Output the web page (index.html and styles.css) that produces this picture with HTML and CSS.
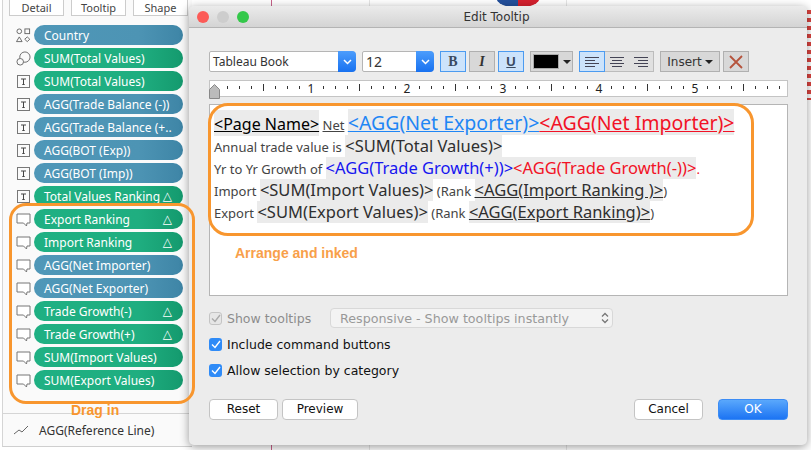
FILE: index.html
```html
<!DOCTYPE html>
<html lang="en">
<head>
    <meta charset="UTF-8">
    <title>Edit Tooltip</title>
    <link rel="stylesheet" href="styles.css">
</head>
<body>
    <svg class="defs" width="0" height="0">
        <symbol id="i-shape" viewBox="0 0 16 16">
            <g fill="none" stroke="#666" stroke-width="1">
                <circle cx="3.5" cy="3.5" r="2.5"/><rect x="9.5" y="1" width="5" height="5"/>
                <path d="M3.5 9.5l3 5h-6z"/><path d="M12 9.5l2.7 2.5-2.7 2.5-2.7-2.5z"/>
            </g>
        </symbol>
        <symbol id="i-size" viewBox="0 0 16 16">
            <g fill="none" stroke="#666" stroke-width="1">
                <circle cx="9.5" cy="6.5" r="5.5"/><circle cx="4.5" cy="11.5" r="3.5" fill="#fafafa"/>
            </g>
        </symbol>
        <symbol id="i-text" viewBox="0 0 15 15">
            <rect x="1.500" y="1.500" width="12" height="12" fill="none" stroke="#777"/>
            <path d="M5 5h5M7.500 5v5.500M6.300 10.500h2.400" fill="none" stroke="#444"/>
        </symbol>
        <symbol id="i-tip" viewBox="0 0 15 15">
            <path d="M1 2h13v9h-3l-.5 3-3-3H1z" fill="#fff" stroke="#777"/>
        </symbol>
    </svg>

    <div class="backdrop">
        <div class="map-line line-a"></div>
        <div class="map-line line-b"></div>
        <div class="map-line line-c"></div>
        <div class="flag"></div>
        <div class="stripes"></div>
    </div>

    <aside class="sidebar">
        <div class="tabs">
            <div class="tab">Detail</div>
            <div class="tab">Tooltip</div>
            <div class="tab">Shape</div>
        </div>
        <div class="rows">
            <div class="row"><svg class="icon"><use href="#i-shape"/></svg><div class="pill blue">Country</div></div>
            <div class="row"><svg class="icon"><use href="#i-size"/></svg><div class="pill green">SUM(Total Values)</div></div>
            <div class="row"><svg class="icon"><use href="#i-text"/></svg><div class="pill green">SUM(Total Values)</div></div>
            <div class="row"><svg class="icon"><use href="#i-text"/></svg><div class="pill blue">AGG(Trade Balance (-))</div></div>
            <div class="row"><svg class="icon"><use href="#i-text"/></svg><div class="pill blue">AGG(Trade Balance (+..</div></div>
            <div class="row"><svg class="icon"><use href="#i-text"/></svg><div class="pill blue">AGG(BOT (Exp))</div></div>
            <div class="row"><svg class="icon"><use href="#i-text"/></svg><div class="pill blue">AGG(BOT (Imp))</div></div>
            <div class="row"><svg class="icon"><use href="#i-text"/></svg><div class="pill green">Total Values Ranking<span class="delta">△</span></div></div>
            <div class="row"><svg class="icon"><use href="#i-tip"/></svg><div class="pill green">Export Ranking<span class="delta">△</span></div></div>
            <div class="row"><svg class="icon"><use href="#i-tip"/></svg><div class="pill green">Import Ranking<span class="delta">△</span></div></div>
            <div class="row"><svg class="icon"><use href="#i-tip"/></svg><div class="pill blue">AGG(Net Importer)</div></div>
            <div class="row"><svg class="icon"><use href="#i-tip"/></svg><div class="pill blue">AGG(Net Exporter)</div></div>
            <div class="row"><svg class="icon"><use href="#i-tip"/></svg><div class="pill green">Trade Growth(-)<span class="delta">△</span></div></div>
            <div class="row"><svg class="icon"><use href="#i-tip"/></svg><div class="pill green">Trade Growth(+)<span class="delta">△</span></div></div>
            <div class="row"><svg class="icon"><use href="#i-tip"/></svg><div class="pill green">SUM(Import Values)</div></div>
            <div class="row"><svg class="icon"><use href="#i-tip"/></svg><div class="pill green">SUM(Export Values)</div></div>
        </div>
        <div class="ref-line">
            <svg class="ref-icon" viewBox="0 0 16 10"><path d="M1 9l5-4 3 2 6-6" fill="none" stroke="#666"/></svg>
            <span>AGG(Reference Line)</span>
        </div>
    </aside>

    <section class="dialog">
        <div class="titlebar">
            <div class="lights">
                <span class="light red"></span>
                <span class="light grey"></span>
                <span class="light lime"></span>
            </div>
            <div class="title">Edit Tooltip</div>
        </div>

        <div class="dialog-body">
            <div class="toolbar">
                <div class="combo font-combo"><span>Tableau Book</span><i class="combo-btn"><svg width="9" height="6" viewBox="0 0 9 6"><path d="M1 1l3.500 3.500L8 1" fill="none" stroke="#fff" stroke-width="1.500"/></svg></i></div>
                <div class="combo size-combo"><span>12</span><i class="combo-btn"><svg width="9" height="6" viewBox="0 0 9 6"><path d="M1 1l3.500 3.500L8 1" fill="none" stroke="#fff" stroke-width="1.500"/></svg></i></div>
                <div class="tool on bold">B</div>
                <div class="tool ital">I</div>
                <div class="tool on under">U</div>
                <div class="tool color"><span class="swatch"></span><span class="caret"></span></div>
                <div class="align-group">
                    <div class="align on"><svg width="16" height="10" viewBox="0 0 16 10"><path d="M1 .5h14M1 3.500h10M1 6.500h14M1 9.500h10" stroke="#445"/></svg></div>
                    <div class="align"><svg width="16" height="10" viewBox="0 0 16 10"><path d="M1 .5h14M3 3.500h10M1 6.500h14M3 9.500h10" stroke="#445"/></svg></div>
                    <div class="align"><svg width="16" height="10" viewBox="0 0 16 10"><path d="M1 .5h14M5 3.500h10M1 6.500h14M5 9.500h10" stroke="#445"/></svg></div>
                </div>
                <div class="tool insert">Insert<span class="caret"></span></div>
                <div class="tool clear"><svg width="14" height="14" viewBox="0 0 14 14"><path d="M1 1l12 12M13 1L1 13" stroke="#b5533c" stroke-width="1.800"/></svg></div>
            </div>

            <div class="ruler">
                <svg class="ruler-mark" width="11" height="15" viewBox="0 0 11 15"><path d="M.5 14.500v-9l5-5 5 5v9z" fill="#bbb" stroke="#888"/></svg>
                <span class="ruler-num">1</span>
                <span class="ruler-num">2</span>
                <span class="ruler-num">3</span>
                <span class="ruler-num">4</span>
                <span class="ruler-num">5</span>
            </div>

            <div class="editor">
                <div class="line first">
                    <span class="f big ul">&lt;Page Name&gt;</span> <span class="plain ul">Net</span> <span class="f huge ul c-blue">&lt;AGG(Net Exporter)&gt;</span><span class="f huge ul c-red">&lt;AGG(Net Importer)&gt;</span>
                </div>
                <div class="line">
                    <span class="plain">Annual trade value is</span> <span class="f">&lt;SUM(Total Values)&gt;</span>
                </div>
                <div class="line">
                    <span class="plain">Yr to Yr Growth of</span> <span class="f c-deep">&lt;AGG(Trade Growth(+))&gt;</span><span class="f c-red">&lt;AGG(Trade Growth(-))&gt;</span><span class="plain c-red">.</span>
                </div>
                <div class="line">
                    <span class="plain">Import</span> <span class="f">&lt;SUM(Import Values)&gt;</span> <span class="plain">(Rank</span> <span class="f ul">&lt;AGG(Import Ranking )&gt;</span><span class="plain">)</span>
                </div>
                <div class="line">
                    <span class="plain">Export</span> <span class="f">&lt;SUM(Export Values)&gt;</span> <span class="plain">(Rank</span> <span class="f ul">&lt;AGG(Export Ranking)&gt;</span><span class="plain">)</span>
                </div>
                <div class="ink-box"></div>
                <div class="ink-label">Arrange and inked</div>
            </div>

            <div class="options">
                <div class="opt-row show-row">
                    <label class="check off"><span class="box"><svg width="10" height="9" viewBox="0 0 10 9"><path d="M1 4.500l3 3 5-6.500" fill="none" stroke="#aaa" stroke-width="1.400"/></svg></span>Show tooltips</label>
                    <div class="select">
                        <span>Responsive - Show tooltips instantly</span>
                        <svg width="8" height="12" viewBox="0 0 8 12"><path d="M1 4.500L4 1.500l3 3M1 7.500l3 3 3-3" fill="none" stroke="#777" stroke-width="1.300"/></svg>
                    </div>
                </div>
                <div class="opt-row incl-row">
                    <label class="check"><span class="box"><svg width="10" height="9" viewBox="0 0 10 9"><path d="M1 4.500l3 3 5-6.500" fill="none" stroke="#fff" stroke-width="1.400"/></svg></span>Include command buttons</label>
                </div>
                <div class="opt-row allow-row">
                    <label class="check"><span class="box"><svg width="10" height="9" viewBox="0 0 10 9"><path d="M1 4.500l3 3 5-6.500" fill="none" stroke="#fff" stroke-width="1.400"/></svg></span>Allow selection by category</label>
                </div>
            </div>

            <div class="footer">
                <div class="btn reset">Reset</div>
                <div class="btn preview">Preview</div>
                <div class="btn cancel">Cancel</div>
                <div class="btn ok">OK</div>
            </div>
        </div>
    </section>

    <div class="drag-box"></div>
    <div class="drag-label">Drag in</div>
</body>
</html>
```

FILE: styles.css
```css
* {
    box-sizing: border-box;
}

html, body {
    margin: 0;
    padding: 0;
}

body {
    position: relative;
    width: 811px;
    height: 450px;
    overflow: hidden;
    background: #fff;
    font-family: "DejaVu Sans", sans-serif;
}

.defs {
    position: absolute;
}

/* map behind the dialog */
.backdrop {
    position: absolute;
    inset: 0;
}

.map-line {
    position: absolute;
    top: 0;
    bottom: 0;
    width: 1px;
    background: #e6e6e6;
}

.line-a { left: 271px; background: #c9628a; }
.line-b { left: 369px; }
.line-c { left: 566px; }

.flag {
    position: absolute;
    left: 496px;
    top: -14px;
    width: 44px;
    height: 22px;
    border-radius: 50%;
    background: linear-gradient(90deg, #23509c 0 50%, #d5202e 50%);
}

.stripes {
    position: absolute;
    left: 806px;
    top: 10px;
    width: 5px;
    height: 90px;
    background: repeating-linear-gradient(180deg, #d9433f 0 4px, #fff 4px 8px);
}

/* left shelf */
.sidebar {
    position: relative;
    width: 190px;
    height: 447px;
    margin-left: 2px;
    display: flex;
    flex-direction: column;
    background: #fafafa;
    border-left: 1px solid #d5d5d5;
    border-bottom: 1px solid #cfcfcf;
}

.tabs {
    display: flex;
    gap: 7px;
    padding-left: 6px;
}

.tab {
    width: 55px;
    height: 16px;
    background: #fff;
    border: 1px solid #ccc;
    border-top: none;
    color: #444;
    font-family: "Noto Sans", sans-serif;
    font-size: 11px;
    line-height: 15px;
    text-align: center;
}

.rows {
    display: flex;
    flex-direction: column;
    gap: 3px;
    padding: 9px 0 0 13px;
}

.row {
    display: flex;
    align-items: center;
    gap: 3px;
    height: 20px;
}

.icon {
    width: 15px;
    height: 15px;
    flex: none;
}

.pill {
    display: flex;
    align-items: center;
    justify-content: space-between;
    width: 149px;
    height: 20px;
    padding: 0 11px 0 10px;
    border-radius: 10px;
    color: #fff;
    font-family: "Noto Sans", sans-serif;
    font-size: 12px;
    white-space: nowrap;
}

.blue {
    background: linear-gradient(90deg, #4f97b8, #4d94b4 70%, #3e85a6);
}

.green {
    background: linear-gradient(90deg, #1fb083, #1fae80 70%, #149a6e);
}

.delta {
    font-family: "DejaVu Sans", sans-serif;
    font-size: 12px;
}

.ref-line {
    display: flex;
    align-items: center;
    gap: 10px;
    height: 33px;
    margin-top: auto;
    padding-left: 10px;
    border-top: 1px solid #d5d5d5;
    color: #333;
    font-family: "Noto Sans", sans-serif;
    font-size: 12px;
}

.ref-icon {
    width: 16px;
    height: 10px;
}

/* hand drawn notes, they lie over the shelf and the dialog edge */
.drag-box {
    position: absolute;
    left: 9px;
    top: 203px;
    width: 186px;
    height: 201px;
    border: 3px solid #f8962e;
    border-radius: 17px;
}

.drag-label {
    position: absolute;
    left: 71px;
    top: 402px;
    color: #f8962e;
    font-family: "Liberation Sans", sans-serif;
    font-size: 14px;
    font-weight: bold;
}

/* dialog window */
.dialog {
    position: absolute;
    left: 189px;
    top: 6px;
    width: 618px;
    height: 439px;
    display: flex;
    flex-direction: column;
    background: #ececec;
    border-radius: 5px;
    box-shadow: 0 2px 10px rgba(0, 0, 0, 0.4);
    overflow: hidden;
}

.titlebar {
    position: relative;
    flex: none;
    height: 22px;
    background: linear-gradient(180deg, #ebebeb, #d4d4d4);
    border-bottom: 1px solid #b4b4b4;
}

.lights {
    display: flex;
    gap: 8px;
    padding: 5px 0 0 8px;
}

.light {
    width: 12px;
    height: 12px;
    border-radius: 50%;
}

.red { background: #fc5b57; }
.grey { background: #cdcdcd; }
.lime { background: #34c84a; }

.title {
    position: absolute;
    left: 0;
    right: 3px;
    top: 4px;
    text-align: center;
    color: #333;
    font-size: 12px;
}

.dialog-body {
    flex: 1;
    display: flex;
    flex-direction: column;
    padding: 23px 19px 0 20px;
}

.toolbar {
    display: flex;
    height: 21px;
    color: #333;
}

.combo {
    display: flex;
    align-items: center;
    justify-content: space-between;
    height: 21px;
    padding-left: 3px;
    background: #fff;
    border: 1px solid #b5b5b5;
    border-radius: 2px 4px 4px 2px;
    font-family: "Noto Sans", sans-serif;
    font-size: 12px;
}

.font-combo { width: 147px; margin-right: 6px; }
.size-combo { width: 72px; margin-right: 6px; font-size: 14px; padding-left: 3px; }

.combo-btn {
    display: flex;
    align-items: center;
    justify-content: center;
    width: 18px;
    height: 21px;
    margin: -1px -1px -1px 0;
    background: linear-gradient(180deg, #4c9dfc, #1871f0);
    border-radius: 0 4px 4px 0;
}

.tool {
    display: flex;
    align-items: center;
    justify-content: center;
    width: 26px;
    height: 21px;
    margin-right: 3px;
    background: #d8d8d8;
    border: 1px solid #b0b0b0;
    color: #333;
    font-size: 12px;
}

.tool.on {
    background: #cce3fb;
    border-color: #4c9bf0;
}

.bold { font-family: "Liberation Serif", serif; font-weight: bold; font-size: 14px; color: #3a4a60; }
.ital { font-family: "Liberation Serif", serif; font-weight: bold; font-style: italic; font-size: 14px; }
.under { text-decoration: underline; font-weight: bold; margin-right: 6px; color: #3a4a60; font-family: "Liberation Sans", sans-serif; font-size: 13px; }

.color {
    width: 43px;
    justify-content: flex-start;
    gap: 4px;
    padding-left: 2px;
    margin-right: 6px;
}

.swatch {
    width: 26px;
    height: 15px;
    background: #000;
    border: 1px solid #aaa;
}

.caret {
    width: 0;
    height: 0;
    border-left: 4px solid transparent;
    border-right: 4px solid transparent;
    border-top: 4px solid #222;
}

.align-group {
    display: flex;
    width: 75px;
    height: 21px;
    margin-right: 6px;
    border: 1px solid #bcbcbc;
    background: #e0e0e0;
}

.align {
    flex: 1;
    display: flex;
    align-items: center;
    justify-content: center;
}

.align.on {
    margin: -1px 0 -1px -1px;
    background: #cce3fb;
    border: 1px solid #4c9bf0;
}

.insert {
    width: 60px;
    gap: 3px;
}

.clear {
    margin-right: 0;
}

.ruler {
    position: relative;
    display: flex;
    height: 17px;
    margin-top: 8px;
    padding-left: 53px;
    background-color: #fff;
    background-image: repeating-linear-gradient(90deg, #333 0 1px, transparent 1px 12px);
    background-size: 100% 3px;
    background-position: 5px 5px;
    background-repeat: no-repeat;
    border: 1px solid #c4c4c4;
}

.ruler::after {
    content: "";
    position: absolute;
    left: 53px;
    right: 0;
    top: 3px;
    height: 7px;
    background: repeating-linear-gradient(90deg, #333 0 1px, transparent 1px 96px);
}

.ruler-mark {
    position: absolute;
    left: -1px;
    top: 3px;
    z-index: 1;
}

.ruler-num {
    position: relative;
    z-index: 1;
    width: 18px;
    margin-right: 78px;
    background: #fff;
    color: #222;
    font-family: "Noto Sans", sans-serif;
    font-size: 12px;
    line-height: 15px;
    text-align: center;
}

.ruler-num:first-of-type {
    margin-left: 39px;
}

.editor {
    position: relative;
    height: 192px;
    margin-top: 7px;
    padding: 4px 0 0 4px;
    background: #fff;
    border: 1px solid #b5b5b5;
    font-family: "Noto Sans", sans-serif;
}

.line {
    height: 22px;
    line-height: 22px;
    white-space: nowrap;
    font-size: 13px;
    color: #333;
}

.line.first {
    height: 26px;
    line-height: 26px;
}

.f {
    display: inline-block;
    height: 22px;
    background: #ebebeb;
    font-size: 16.500px;
    color: #2f2f2f;
}

.first .f {
    height: 26px;
    line-height: 28px;
}

.f.big { font-size: 16px; color: #000; }
.f.huge { font-size: 19.500px; }
.plain { color: #444; font-size: 13px; }
.ul { text-decoration: underline; }
.f.c-blue { color: #1f86f5; }
.f.c-deep { color: #1616f0; }
.c-red, .f.c-red { color: #f21226; }

.ink-box {
    position: absolute;
    left: -2px;
    top: -2px;
    width: 546px;
    height: 133px;
    border: 3px solid #f8962e;
    border-radius: 20px;
}

.ink-label {
    position: absolute;
    left: 25px;
    top: 140px;
    color: #f8a04a;
    font-family: "Liberation Sans", sans-serif;
    font-size: 14px;
    font-weight: bold;
}

.options {
    display: flex;
    flex-direction: column;
    margin-top: 12px;
    font-size: 12.500px;
    color: #111;
}

.opt-row {
    display: flex;
    align-items: center;
}

.show-row { height: 20px; }
.incl-row { height: 20px; margin-top: 6px; }
.allow-row { height: 20px; margin-top: 6px; }

.check {
    display: flex;
    align-items: center;
    gap: 5px;
}

.box {
    display: flex;
    align-items: center;
    justify-content: center;
    width: 13px;
    height: 13px;
    background: #2f8bf7;
    border-radius: 3px;
}

.check.off {
    color: #8c8c8c;
    width: 121px;
}

.check.off .box {
    background: #e6e6e6;
    border: 1px solid #c4c4c4;
}

.select {
    display: flex;
    align-items: center;
    justify-content: space-between;
    width: 283px;
    height: 20px;
    padding: 0 3px 0 9px;
    background: #f3f3f3;
    border: 1px solid #d8d8d8;
    border-radius: 4px;
    color: #999;
    font-size: 12.700px;
}

.footer {
    display: flex;
    margin-top: 19px;
    font-size: 12px;
}

.btn {
    height: 21px;
    line-height: 19px;
    background: #fff;
    border: 1px solid #c4c4c4;
    border-radius: 4px;
    text-align: center;
    color: #111;
}

.reset { width: 69px; margin-right: 4px; }
.preview { width: 76px; margin-right: auto; }
.cancel { width: 69px; margin-right: 15px; }

.ok {
    width: 70px;
    background: linear-gradient(180deg, #5aa8fc, #1c74f3);
    border-color: #3c8cf5;
    color: #fff;
}
```
